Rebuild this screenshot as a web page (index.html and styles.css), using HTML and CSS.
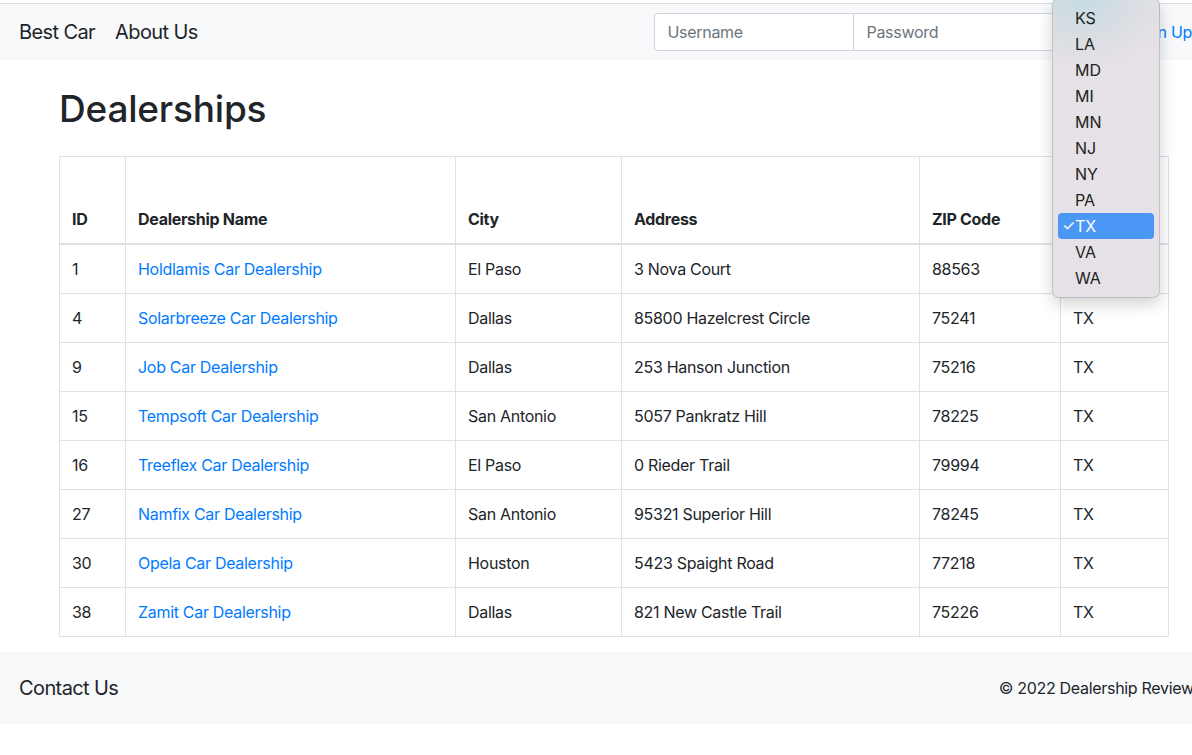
FILE: index.html
```html
<!DOCTYPE html>
<html>
<head>
<meta charset="utf-8">
<title>Dealerships</title>
<link rel="stylesheet" href="styles.css">
</head>
<body>
<div class="page">
  <nav class="navbar">
    <div class="nav-left">
      <a class="brand" href="#">Best Car</a>
      <a class="nav-link" href="#">About Us</a>
    </div>
    <form class="nav-right">
      <div class="input-group">
        <input class="field first" type="text" placeholder="Username">
        <input class="field" type="password" placeholder="Password">
        <button class="btn-login" type="button">Login</button>
      </div>
      <a class="signup" href="#">Sign Up</a>
    </form>
  </nav>

  <main class="main">
    <h1 class="title">Dealerships</h1>
    <table class="table">
      <colgroup>
        <col class="c-id"><col class="c-name"><col class="c-city"><col class="c-addr"><col class="c-zip"><col class="c-state">
      </colgroup>
      <thead>
        <tr>
          <th>ID</th>
          <th>Dealership Name</th>
          <th>City</th>
          <th>Address</th>
          <th>ZIP Code</th>
          <th class="th-state"><div class="state-select"><span class="sel-val">TX</span><span class="chev">&#8964;</span></div></th>
        </tr>
      </thead>
      <tbody>
        <tr><td>1</td><td><a href="#">Holdlamis Car Dealership</a></td><td>El Paso</td><td>3 Nova Court</td><td>88563</td><td>TX</td></tr>
        <tr><td>4</td><td><a href="#">Solarbreeze Car Dealership</a></td><td>Dallas</td><td>85800 Hazelcrest Circle</td><td>75241</td><td>TX</td></tr>
        <tr><td>9</td><td><a href="#">Job Car Dealership</a></td><td>Dallas</td><td>253 Hanson Junction</td><td>75216</td><td>TX</td></tr>
        <tr><td>15</td><td><a href="#">Tempsoft Car Dealership</a></td><td>San Antonio</td><td>5057 Pankratz Hill</td><td>78225</td><td>TX</td></tr>
        <tr><td>16</td><td><a href="#">Treeflex Car Dealership</a></td><td>El Paso</td><td>0 Rieder Trail</td><td>79994</td><td>TX</td></tr>
        <tr><td>27</td><td><a href="#">Namfix Car Dealership</a></td><td>San Antonio</td><td>95321 Superior Hill</td><td>78245</td><td>TX</td></tr>
        <tr><td>30</td><td><a href="#">Opela Car Dealership</a></td><td>Houston</td><td>5423 Spaight Road</td><td>77218</td><td>TX</td></tr>
        <tr><td>38</td><td><a href="#">Zamit Car Dealership</a></td><td>Dallas</td><td>821 New Castle Trail</td><td>75226</td><td>TX</td></tr>
      </tbody>
    </table>
  </main>

  <footer class="footer">
    <span class="contact">Contact Us</span>
    <span class="copy">&copy; 2022 Dealership Reviews</span>
  </footer>
</div>

<ul class="popup">
  <li>KS</li>
  <li>LA</li>
  <li>MD</li>
  <li>MI</li>
  <li>MN</li>
  <li>NJ</li>
  <li>NY</li>
  <li>PA</li>
  <li class="selected"><span class="check">&#10003;</span>TX</li>
  <li>VA</li>
  <li>WA</li>
</ul>
</body>
</html>
```

FILE: styles.css
```css
html {
  overflow-x: hidden;
}
body {
  margin: 0;
  font-family: Inter, "Noto Sans", "Liberation Sans", sans-serif;
  color: #212529;
  font-size: 16px;
  letter-spacing: -0.3px;
  background: #fff;
}
.page {
  width: 1216px;
  padding-top: 3px;
}
a {
  color: #007bff;
  text-decoration: none;
}

/* navbar */
.navbar {
  display: flex;
  align-items: center;
  justify-content: space-between;
  height: 56px;
  background: #f8f9fa;
  border-top: 1px solid #dcdcdc;
  padding: 0 16px 0 19px;
}
.nav-left {
  display: flex;
  align-items: center;
  gap: 20px;
}
.brand, .nav-link {
  color: #212529;
  font-size: 20px;
  letter-spacing: -0.6px;
}
.nav-right {
  display: flex;
  align-items: center;
  margin: 0;
}
.input-group {
  display: flex;
  align-items: center;
}
.field {
  width: 200px;
  height: 38px;
  box-sizing: border-box;
  border: 1px solid #ced4da;
  border-left: none;
  padding: 0 12px;
  font-family: inherit;
  font-size: 16px;
  letter-spacing: -0.3px;
  color: #495057;
  background: #fff;
  margin: 0;
  outline: none;
}
.field.first {
  border-left: 1px solid #ced4da;
  border-radius: 4px 0 0 4px;
}
.field::placeholder {
  color: #6c757d;
}
.btn-login {
  height: 38px;
  width: 66px;
  margin: 0 0 0 4px;
  border: 1px solid #007bff;
  background: #007bff;
  color: #fff;
  font-family: inherit;
  font-size: 16px;
  border-radius: 0 4px 4px 0;
}
.signup {
  padding: 0 8px 0 10px;
  font-size: 16px;
}

/* main */
.main {
  padding: 21px 48px 15px 59px;
}
.title {
  margin: 0 0 20px 0;
  font-size: 37px;
  font-weight: 500;
  line-height: 55px;
  letter-spacing: -0.2px;
}
.table {
  width: 1109px;
  table-layout: fixed;
  border-collapse: collapse;
  font-size: 16px;
}
.c-id { width: 66px; }
.c-name { width: 330px; }
.c-city { width: 166px; }
.c-addr { width: 298px; }
.c-zip { width: 141px; }
.c-state { width: 108px; }

.table th, .table td {
  border: 1px solid #dee2e6;
  padding: 12px;
  text-align: left;
  line-height: 24px;
}
.table th {
  height: 62px;
  vertical-align: bottom;
  font-weight: 700;
  border-bottom: 2px solid #dee2e6;
  padding-bottom: 12px;
}
.table td {
  height: 24px;
  vertical-align: top;
}
.th-state {
  position: relative;
  padding-right: 1px;
}
.state-select {
  display: flex;
  align-items: center;
  justify-content: space-between;
  height: 34px;
  margin-bottom: -6px;
  box-sizing: border-box;
  border: 1px solid #80bdff;
  border-radius: 4px;
  box-shadow: 0 0 0 3px rgba(0, 123, 255, 0.25);
  padding: 0 3px 0 10px;
  font-weight: 400;
  background: #fff;
}
.chev {
  font-size: 10px;
  color: #333;
}

/* footer */
.footer {
  display: flex;
  align-items: center;
  justify-content: space-between;
  height: 72px;
  background: #f8f9fa;
  padding: 0 16px 0 19px;
}
.contact {
  font-size: 20px;
  letter-spacing: -0.6px;
}
.copy {
  font-size: 16px;
  margin-right: -2px;
}

/* native dropdown popup overlay */
.popup {
  position: absolute;
  left: 1052px;
  top: -2px;
  width: 108px;
  box-sizing: border-box;
  margin: 0;
  padding: 6px 5px 6px 5px;
  list-style: none;
  background: radial-gradient(ellipse 90px 70px at 30px 0px, #c6dde3 0%, #d6dde2 45%, #e6e1e6 100%);
  border: 1px solid rgba(0, 0, 0, 0.14);
  border-radius: 7px;
  box-shadow: 0 6px 16px rgba(0, 0, 0, 0.18);
  font-size: 16px;
  letter-spacing: 0;
  color: #222;
}
.popup li {
  position: relative;
  height: 26px;
  line-height: 26px;
  padding-left: 17px;
  border-radius: 4px;
}
.popup li.selected {
  background: #4a97f5;
  color: #fff;
}
.check {
  position: absolute;
  left: 4px;
  top: 0;
  font-size: 15px;
}
```
